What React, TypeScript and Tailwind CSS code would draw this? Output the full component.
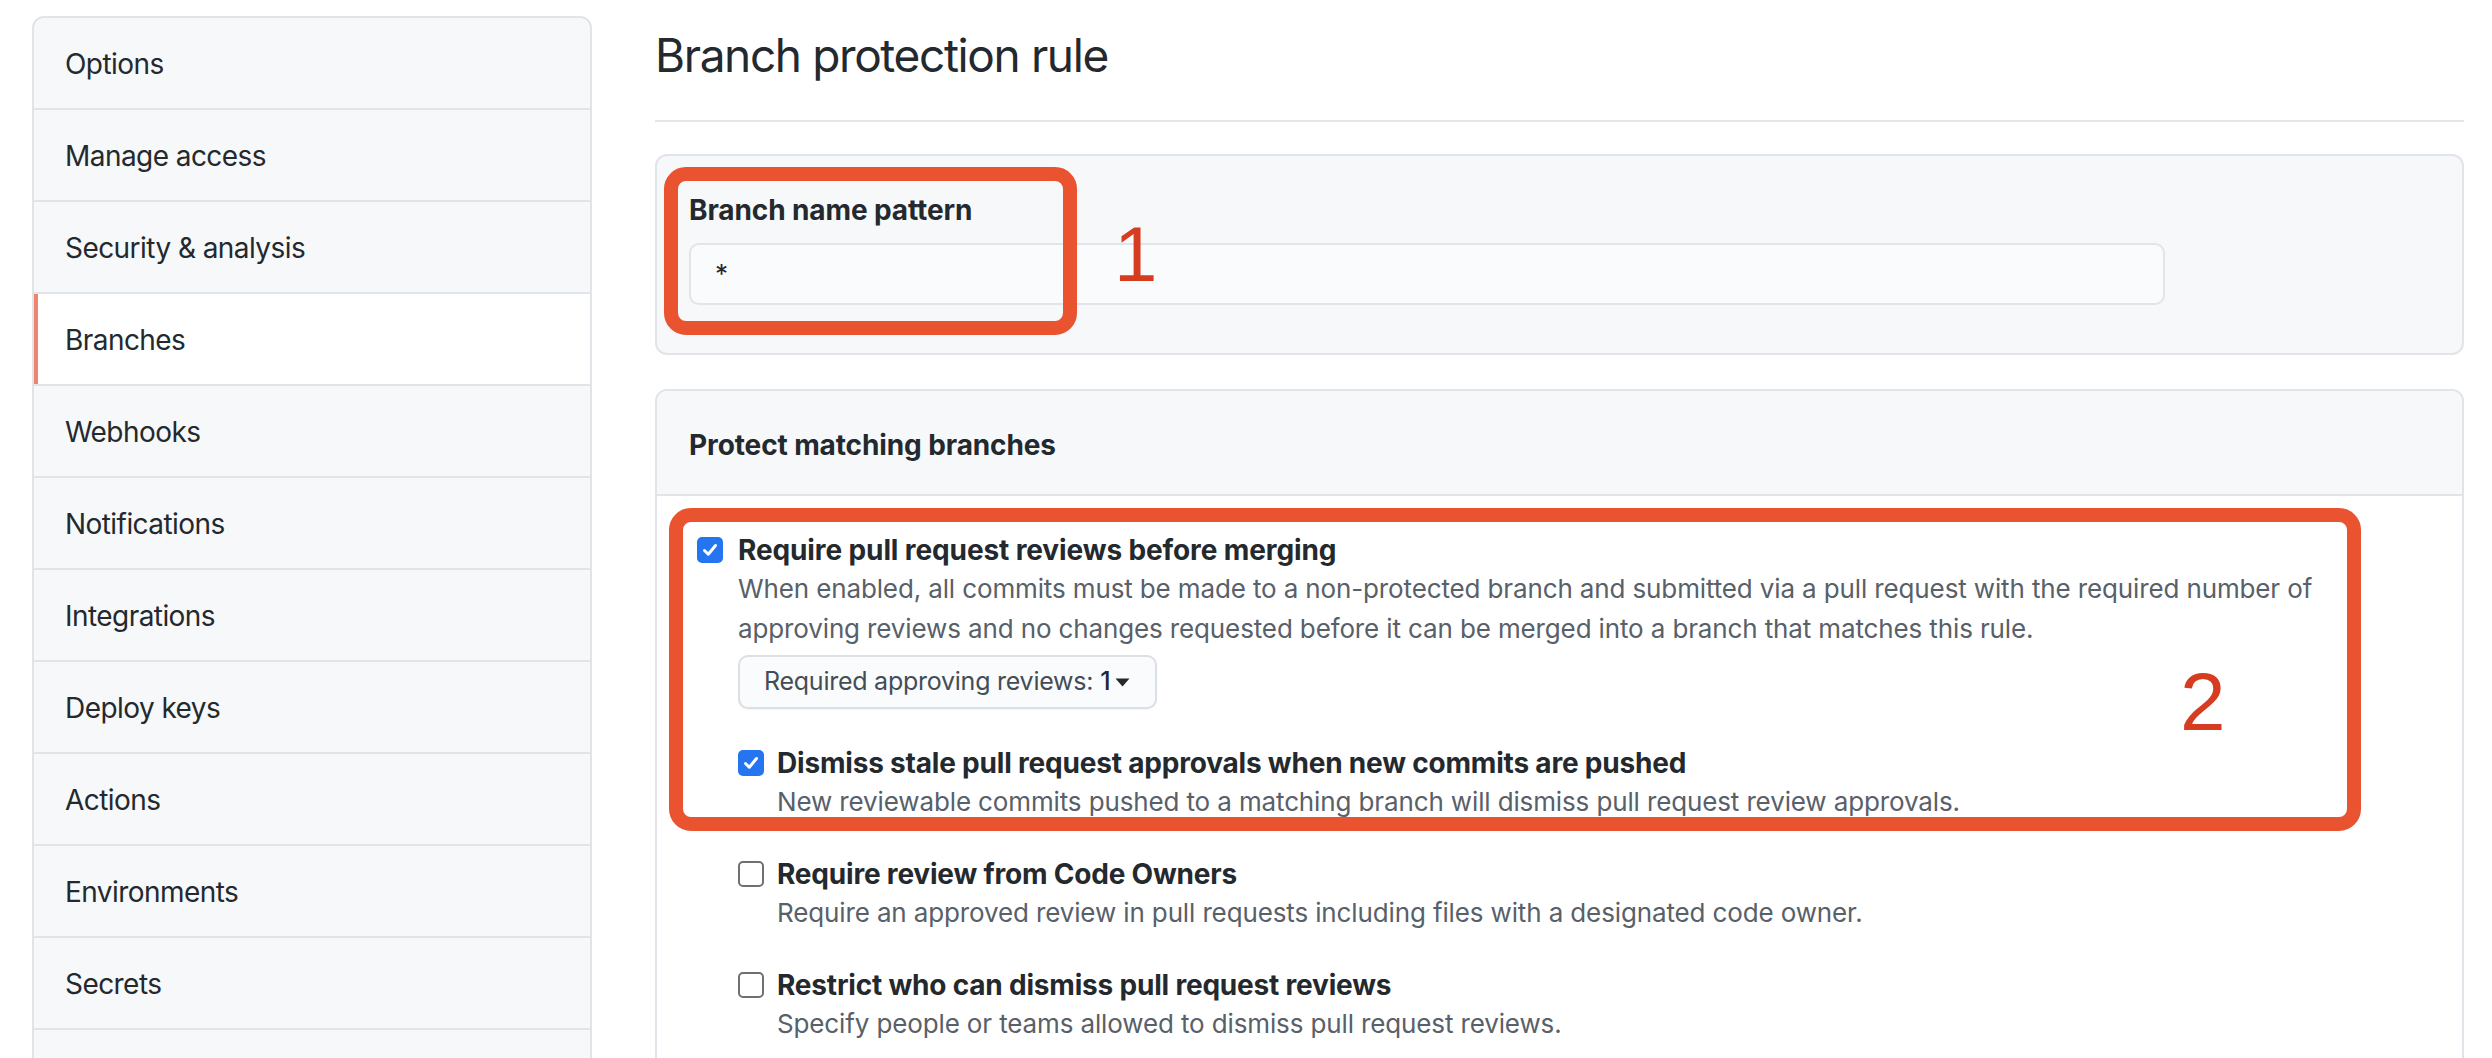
import React from "react";

const font = { fontFamily: "Inter, 'Noto Sans', 'Liberation Sans', sans-serif" };

function Check({ checked }: { checked: boolean }) {
  if (checked) {
    return (
      <div className="w-[26px] h-[26px] rounded-[5px] bg-[#2574f0] flex items-center justify-center shrink-0">
        <svg width="18" height="18" viewBox="0 0 18 18" fill="none">
          <path d="M3.5 9.5 L7.3 13.2 L14.5 4.5" stroke="white" strokeWidth="3" strokeLinecap="round" strokeLinejoin="round" />
        </svg>
      </div>
    );
  }
  return <div className="w-[26px] h-[26px] rounded-[5px] border-2 border-[#6e7074] bg-white shrink-0" />;
}

function Option({
  checked,
  title,
  children,
}: {
  checked: boolean;
  title: string;
  children: React.ReactNode;
}) {
  return (
    <div className="flex gap-[13px]">
      <div className="pt-[6px]">
        <Check checked={checked} />
      </div>
      <div>
        <div className="text-[28px] leading-[38px] font-bold text-[#24292e] tracking-[-0.007em]">{title}</div>
        <div className="text-[26px] leading-[40px] text-[#586069] tracking-[-0.005em]">{children}</div>
      </div>
    </div>
  );
}

export default function App() {
  const items = [
    "Options",
    "Manage access",
    "Security & analysis",
    "Branches",
    "Webhooks",
    "Notifications",
    "Integrations",
    "Deploy keys",
    "Actions",
    "Environments",
    "Secrets",
    "",
  ];
  return (
    <div className="relative w-[2492px] h-[1058px] overflow-hidden bg-white" style={font}>
      <div className="flex pl-[32px]">
        {/* Sidebar */}
        <div className="mt-[16px] w-[560px] shrink-0 border-2 border-[#e1e4e8] rounded-t-[12px] overflow-hidden bg-[#f6f8fa]">
          {items.map((it, i) => {
            const sel = it === "Branches";
            return (
              <div
                key={i}
                className={
                  sel
                    ? "h-[92px] border-b-2 border-[#e1e4e8] bg-white flex items-center"
                    : "h-[92px] border-b-2 border-[#e1e4e8] flex items-center"
                }
              >
                <div className={sel ? "w-[4px] h-full bg-[#f0846f]" : "w-[4px] h-full"} />
                <span className="pl-[27px] pt-[2px] text-[28px] text-[#24292e] tracking-[-0.02em]">{it}</span>
              </div>
            );
          })}
        </div>

        {/* Main */}
        <div className="ml-[63px] w-[1809px] pt-[26px]">
          <div className="pb-[36px] border-b-2 border-[#e4e6ea]">
            <h1 className="text-[46px] leading-[58px] text-[#24292e] font-normal tracking-[-0.03em]">Branch protection rule</h1>
          </div>

          {/* Box 1 */}
          <div className="mt-[32px] border-2 border-[#e1e4e8] rounded-[12px] bg-[#f6f8fa] pl-[32px] pt-[33px] pb-[48px]">
            <div className="text-[28px] leading-[42px] font-bold text-[#24292e] tracking-[-0.004em]">Branch name pattern</div>
            <div className="mt-[12px] w-[1476px] h-[62px] border-2 border-[#e1e4e8] rounded-[10px] bg-[#fafbfc] flex items-center pl-[24px] pb-[2px] text-[26px] text-[#24292e]">
              *
            </div>
          </div>

          {/* Box 2 */}
          <div className="mt-[34px] border-2 border-[#e1e4e8] rounded-t-[12px] h-[700px]">
            <div className="bg-[#f6f8fa] border-b-2 border-[#e1e4e8] pl-[32px] pt-[33px] pb-[28px] rounded-t-[10px]">
              <div className="text-[28px] leading-[42px] font-bold text-[#24292e] tracking-[-0.004em]">Protect matching branches</div>
            </div>
            <div className="pl-[40px] pt-[35px]">
              <div className="flex gap-[15px]">
                <div className="pt-[6px]">
                  <Check checked={true} />
                </div>
                <div>
                  <div className="text-[28px] leading-[38px] font-bold text-[#24292e] tracking-[-0.004em]">
                    Require pull request reviews before merging
                  </div>
                  <div className="text-[26px] leading-[40px] text-[#586069] tracking-[-0.005em]">
                    When enabled, all commits must be made to a non-protected branch and submitted via a pull request with the required number of
                    <br />
                    approving reviews and no changes requested before it can be merged into a branch that matches this rule.
                  </div>
                  <div className="mt-[6px] w-[419px] h-[54px] border-2 border-[#dcdfe3] rounded-[10px] bg-[#fafbfc] flex items-center pl-[24px] text-[25px] text-[#444d56] tracking-[-0.01em] shadow-[0_1px_0_rgba(27,31,35,0.04)]">
                    <span>Required approving reviews:</span>
                    <span className="ml-[7px] text-[#24292e] font-medium">1</span>
                    <svg className="ml-[5px]" width="15" height="9" viewBox="0 0 15 9">
                      <path d="M0.5 0.5 L14.5 0.5 L7.5 8.5 Z" fill="#24292e" />
                    </svg>
                  </div>
                  <div className="mt-[35px] flex flex-col gap-[33px]">
                    <Option checked={true} title="Dismiss stale pull request approvals when new commits are pushed">
                      New reviewable commits pushed to a matching branch will dismiss pull request review approvals.
                    </Option>
                    <Option checked={false} title="Require review from Code Owners">
                      Require an approved review in pull requests including files with a designated code owner.
                    </Option>
                    <Option checked={false} title="Restrict who can dismiss pull request reviews">
                      Specify people or teams allowed to dismiss pull request reviews.
                    </Option>
                  </div>
                </div>
              </div>
            </div>
          </div>
        </div>
      </div>

      {/* Annotations */}
      <div className="absolute left-[664px] top-[167px] w-[413px] h-[168px] border-[14px] border-[#e9532f] rounded-[22px]" />
      <div
        className="absolute left-[1114px] top-[215px] text-[78px] leading-none text-[#d63d20]"
        style={{ fontFamily: "'Liberation Sans', Arial, sans-serif" }}
      >
        1
      </div>
      <div className="absolute left-[669px] top-[508px] w-[1692px] h-[323px] border-[14px] border-[#e9532f] rounded-[22px]" />
      <div
        className="absolute left-[2180px] top-[661px] text-[82px] leading-none text-[#d63d20]"
        style={{ fontFamily: "'Liberation Sans', Arial, sans-serif" }}
      >
        2
      </div>
    </div>
  );
}
